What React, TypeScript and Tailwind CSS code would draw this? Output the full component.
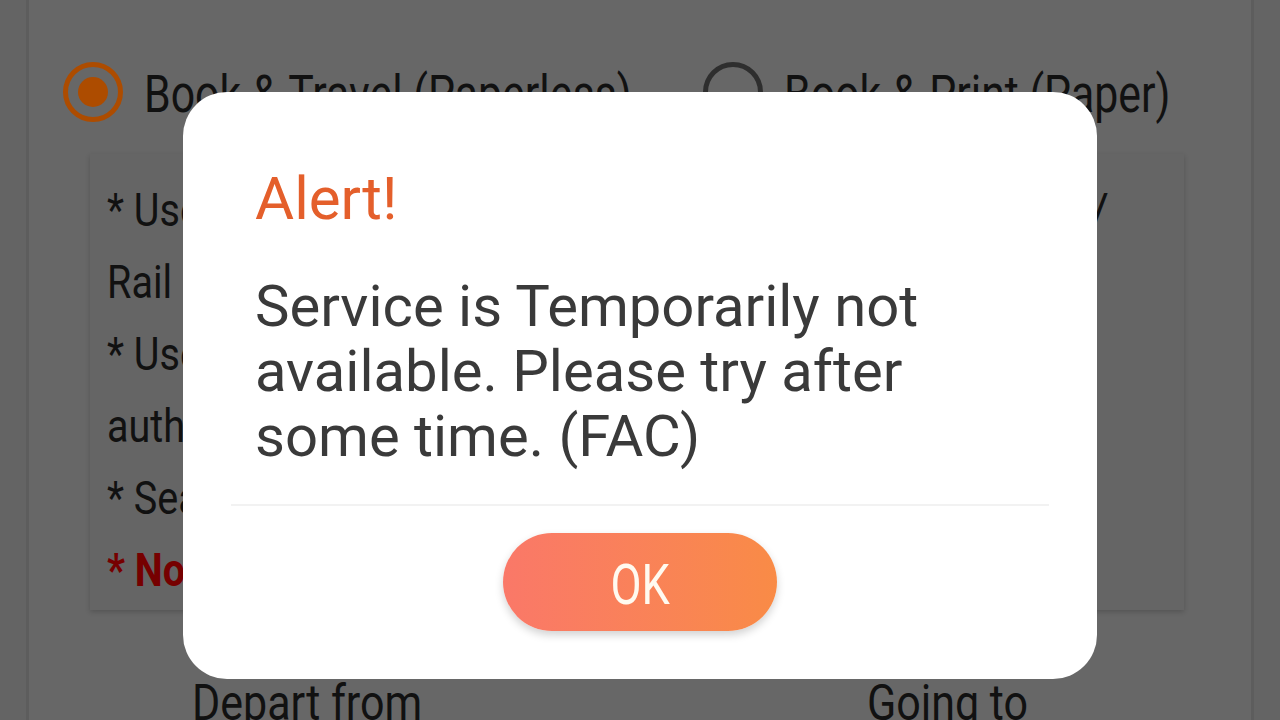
import React from "react";

const NOTES = [
  { text: "Rail Connect account for paperless travel.", red: false },
  { text: "* User must carry original ID proof for", red: false },
  { text: "authentication during the journey.", red: false },
  { text: "* Seat allotment is subject to availability.", red: false },
  { text: "* No printout of the ticket is required.", red: true },
];

function Radio({ checked }: { checked: boolean }) {
  return (
    <svg width="62" height="62" viewBox="0 0 62 62" className="shrink-0">
      <circle
        cx="31"
        cy="31"
        r="27.5"
        fill="none"
        stroke={checked ? "#ad4c00" : "#2e2e2e"}
        strokeWidth="5"
      />
      {checked && <circle cx="31" cy="31" r="15" fill="#ad4c00" />}
    </svg>
  );
}

export default function App() {
  return (
    <div className="relative w-[1280px] h-[720px] overflow-hidden bg-[#646464] font-['Roboto',sans-serif]">
      {/* Dimmed page behind the dialog */}
      <div className="flex h-full">
        <div className="w-[29px] shrink-0 border-r-[3px] border-[#5d5d5d]" />
        <div className="flex-1 flex flex-col bg-[#676767]">
          <div className="h-[12px] bg-gradient-to-r from-[#8b392c] to-[#8a4922]" />

          <div className="flex items-center mt-[62px] h-[60px] pl-[33px] text-[#111] text-[51px]">
            <div className="flex items-center gap-[20px] w-[640px]">
              <Radio checked />
              <span className="inline-block whitespace-nowrap scale-x-[0.84] origin-left mt-[6px]">
                Book &amp; Travel (Paperless)
              </span>
            </div>
            <div className="flex items-center gap-[20px]">
              <Radio checked={false} />
              <span className="inline-block whitespace-nowrap scale-x-[0.84] origin-left mt-[6px]">
                Book &amp; Print (Paper)
              </span>
            </div>
          </div>

          <div className="ml-[61px] mt-[32px] w-[1094px] bg-[#656565] shadow-[0_2px_5px_rgba(0,0,0,0.18)] pl-[17px] pr-[75px] pt-[20px] pb-[4px] text-[46px] leading-[72px] text-[#111]">
            <div className="flex justify-between whitespace-nowrap">
              <span className="inline-block scale-x-[0.86] origin-left">* Use IRCTC eWallet / UPI / Cards</span>
              <span>/</span>
            </div>
            {NOTES.map((n) => (
              <div
                key={n.text}
                className={
                  n.red
                    ? "whitespace-nowrap font-bold text-[#760000]"
                    : "whitespace-nowrap"
                }
              >
                <span className="inline-block scale-x-[0.86] origin-left">{n.text}</span>
              </div>
            ))}
          </div>

          <div className="flex mt-[63px] h-[60px] leading-[60px] text-[50px] text-[#111] whitespace-nowrap">
            <span className="inline-block ml-[163px] w-[675px] scale-x-[0.86] origin-left">Depart from</span>
            <span className="inline-block scale-x-[0.86] origin-left">Going to</span>
          </div>
        </div>
        <div className="w-[29px] shrink-0 border-l-[3px] border-[#5d5d5d]" />
      </div>

      {/* Alert dialog */}
      <div className="absolute left-[183px] top-[92px] w-[914px] bg-white rounded-[44px] pt-[73px] pb-[48px] flex flex-col">
        <div className="pl-[72px] text-[60px] leading-[68px] text-[#e45f2b]">Alert!</div>
        <div className="pl-[72px] pr-[50px] mt-[41px] text-[58px] leading-[65px] text-[#3a3a3a]">
          Service is Temporarily not
          <br />
          available. Please try after
          <br />
          some time. (FAC)
        </div>
        <div className="mx-[48px] mt-[35px] h-[2px] bg-[#f2f2f2]" />
        <button className="self-center mt-[27px] w-[274px] h-[98px] rounded-full bg-gradient-to-r from-[#fa7868] to-[#f98b46] shadow-[0_4px_8px_rgba(0,0,0,0.18)] flex items-center justify-center">
          <span className="inline-block text-[55px] leading-none text-[#fffaf0] scale-x-[0.82] mt-[6px]">OK</span>
        </button>
      </div>
    </div>
  );
}
